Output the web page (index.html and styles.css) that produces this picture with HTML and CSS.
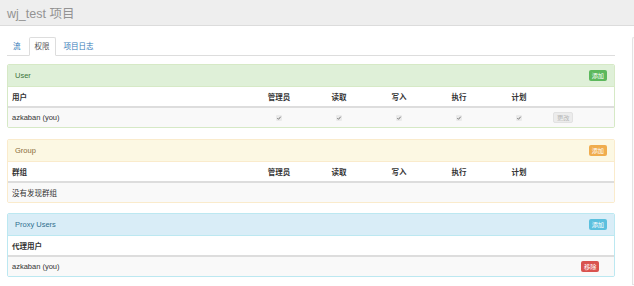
FILE: index.html
```html
<!DOCTYPE html>
<html lang="zh">
<head>
<meta charset="utf-8">
<title>wj_test 项目</title>
<link rel="stylesheet" href="styles.css">
</head>
<body>
<div class="topbar">wj_test 项目</div>
<div class="layout">
  <div class="main">
    <ul class="tabs">
      <li class="tab">流</li>
      <li class="tab active">权限</li>
      <li class="tab">项目日志</li>
    </ul>

    <div class="panel panel-success">
      <div class="panel-heading"><span>User</span><span class="btn btn-success">添加</span></div>
      <table class="perm-table">
        <thead>
          <tr><th>用户</th><th class="perm">管理员</th><th class="perm">读取</th><th class="perm">写入</th><th class="perm">执行</th><th class="perm">计划</th><th class="action"></th></tr>
        </thead>
        <tbody>
          <tr>
            <td>azkaban (you)</td>
            <td class="perm"><span class="chk"><svg viewBox="0 0 6 6"><path d="M1.3 3.1 L2.5 4.3 L4.7 1.7" /></svg></span></td>
            <td class="perm"><span class="chk"><svg viewBox="0 0 6 6"><path d="M1.3 3.1 L2.5 4.3 L4.7 1.7" /></svg></span></td>
            <td class="perm"><span class="chk"><svg viewBox="0 0 6 6"><path d="M1.3 3.1 L2.5 4.3 L4.7 1.7" /></svg></span></td>
            <td class="perm"><span class="chk"><svg viewBox="0 0 6 6"><path d="M1.3 3.1 L2.5 4.3 L4.7 1.7" /></svg></span></td>
            <td class="perm"><span class="chk"><svg viewBox="0 0 6 6"><path d="M1.3 3.1 L2.5 4.3 L4.7 1.7" /></svg></span></td>
            <td class="action"><span class="btn btn-disabled">更改</span></td>
          </tr>
        </tbody>
      </table>
    </div>

    <div class="panel panel-warning">
      <div class="panel-heading"><span>Group</span><span class="btn btn-warning">添加</span></div>
      <table class="perm-table">
        <thead>
          <tr><th>群组</th><th class="perm">管理员</th><th class="perm">读取</th><th class="perm">写入</th><th class="perm">执行</th><th class="perm">计划</th><th class="action"></th></tr>
        </thead>
        <tbody>
          <tr><td colspan="7">没有发现群组</td></tr>
        </tbody>
      </table>
    </div>

    <div class="panel panel-info">
      <div class="panel-heading"><span>Proxy Users</span><span class="btn btn-info">添加</span></div>
      <table class="perm-table">
        <thead>
          <tr><th>代理用户</th><th class="action-sm"></th></tr>
        </thead>
        <tbody>
          <tr><td>azkaban (you)</td><td class="action-sm"><span class="btn btn-danger">移除</span></td></tr>
        </tbody>
      </table>
    </div>
  </div>
  <div class="side"></div>
</div>
</body>
</html>
```

FILE: styles.css
```css
* { box-sizing: border-box; }
html, body { margin: 0; padding: 0; }
body {
  width: 634px;
  height: 286px;
  overflow: hidden;
  background: #fff;
  font-family: "Liberation Sans", "Noto Sans CJK SC", sans-serif;
  font-size: 7.5px;
  color: #333;
}
.topbar {
  height: 26px;
  background: #eeeeee;
  border-bottom: 1px solid #dcdcdc;
  display: flex;
  align-items: center;
  padding-left: 7px;
  font-size: 12.5px;
  color: #939393;
}
.layout {
  display: flex;
  gap: 17px;
  padding: 11px 0 0 7px;
  height: 260px;
  overflow: hidden;
}
.main { width: 608px; flex: none; }
.side {
  flex: 1;
  height: 248px;
  border: 1px solid #e3e3e3;
  border-right: none;
  border-radius: 3px 0 0 0;
  background: #fbfbfb;
}
.tabs {
  list-style: none;
  margin: 0 0 8px;
  padding: 0;
  display: flex;
  border-bottom: 1px solid #ddd;
}
.tab {
  padding: 0 5px;
  line-height: 17px;
  border: 1px solid transparent;
  margin: 0 2px -1px 0;
  color: #337ab7;
  border-radius: 2px 2px 0 0;
}
.tab.active {
  border-color: #ddd;
  border-bottom-color: #fff;
  background: #fff;
  color: #555;
}
.panel {
  border: 1px solid;
  border-radius: 2px;
  margin-bottom: 10px;
  overflow: hidden;
  background: #fff;
}
.panel-success { margin-bottom: 11px; }
.panel-heading {
  height: 22px;
  padding: 0 7px 0 7px;
  display: flex;
  align-items: center;
  justify-content: space-between;
  border-bottom: 1px solid;
}
.panel-success { border-color: #d6e9c6; }
.panel-success .panel-heading { background: #dff0d8; color: #3c763d; border-color: #d6e9c6; }
.panel-warning { border-color: #faebcc; }
.panel-warning .panel-heading { background: #fcf8e3; color: #8a6d3b; border-color: #faebcc; }
.panel-info { border-color: #bce8f1; }
.panel-info .panel-heading { background: #d9edf7; color: #31708f; border-color: #bce8f1; }

.btn {
  display: inline-block;
  height: 11px;
  line-height: 11px;
  padding: 0 3px;
  font-size: 6.2px;
  color: #fff;
  border-radius: 2px;
}
.btn-success { background: #5cb85c; }
.btn-warning { background: #f0ad4e; }
.btn-info { background: #5bc0de; }
.btn-danger { background: #d9534f; }
.btn-disabled {
  background: #ececec;
  color: #b5b5b5;
  border: 1px solid #e2e2e2;
  height: 11px;
  line-height: 9px;
  padding: 0 3px;
}

.perm-table {
  width: 100%;
  border-collapse: collapse;
  table-layout: fixed;
}
.perm-table th {
  height: 20px;
  padding: 0 4px;
  text-align: left;
  font-weight: bold;
  border-bottom: 2px solid #ddd;
  background: #fff;
}
.perm-table td {
  height: 20px;
  padding: 0 4px;
  background: #f9f9f9;
}
.perm-table .perm { width: 60px; text-align: center; }
.perm-table .action { width: 65px; }
.perm-table .action-sm { width: 37px; }
.chk {
  display: inline-block;
  width: 6px;
  height: 6px;
  background: #ebebeb;
  border-radius: 1px;
  vertical-align: middle;
}
.chk svg { display: block; width: 100%; height: 100%; }
.chk path { fill: none; stroke: #777; stroke-width: 1; }
```
